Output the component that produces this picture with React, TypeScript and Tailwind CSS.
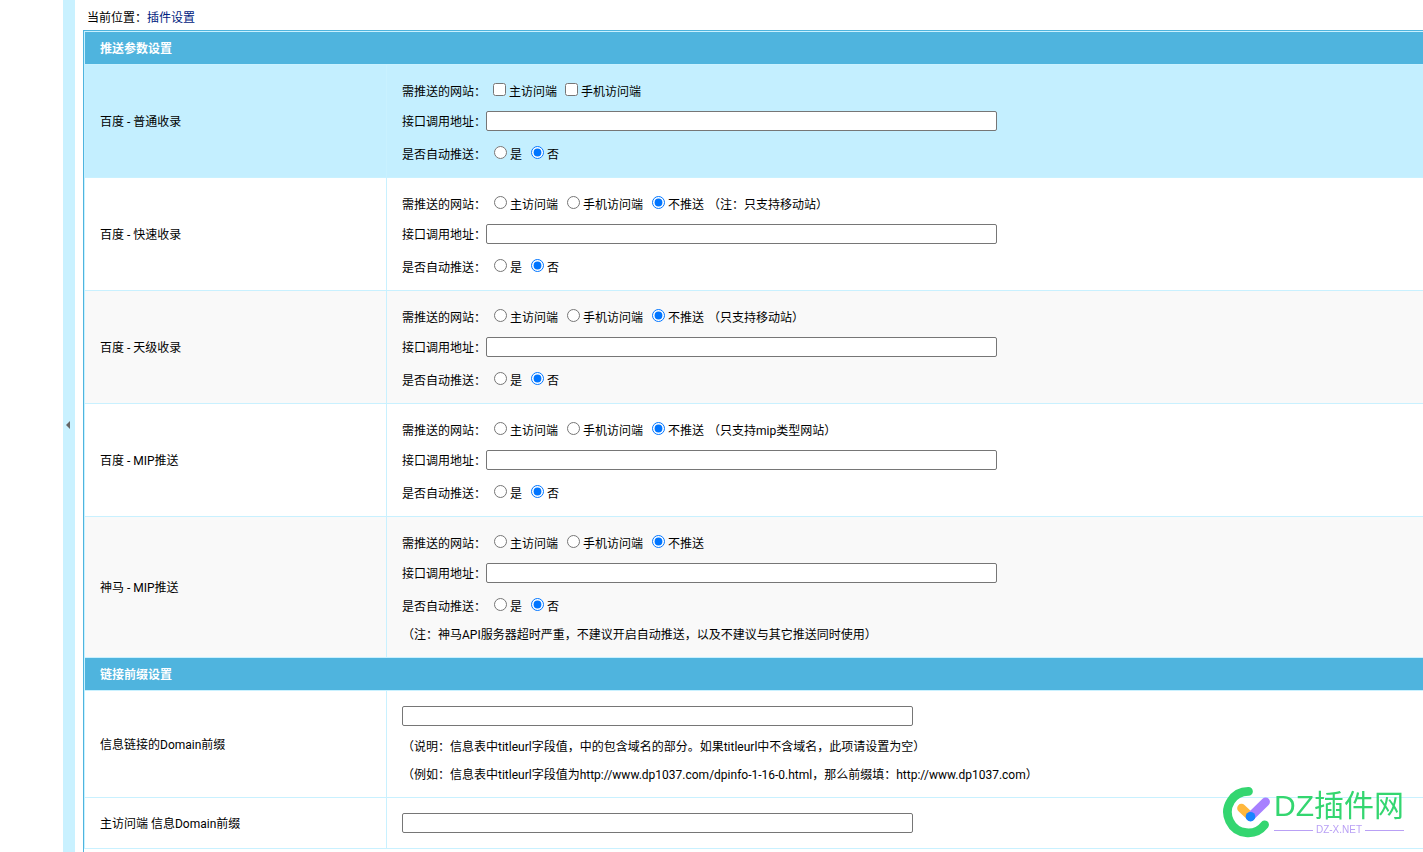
import React, { useState } from 'react';

interface Option {
  value: string;
  label: string;
}

interface PushChannel {
  id: string;
  title: string;
  multiple?: boolean;
  options: Option[];
  hint?: string;
  note?: string;
  rowClass: string;
}

const siteOptions: Option[] = [
  { value: 'pc', label: '主访问端' },
  { value: 'mobile', label: '手机访问端' },
];

const siteOptionsWithNone: Option[] = [...siteOptions, { value: 'none', label: '不推送' }];

const yesNoOptions: Option[] = [
  { value: 'yes', label: '是' },
  { value: 'no', label: '否' },
];

const channels: PushChannel[] = [
  { id: 'baidu-normal', title: '百度 - 普通收录', multiple: true, options: siteOptions, rowClass: 'bg-[#c4efff]' },
  { id: 'baidu-fast', title: '百度 - 快速收录', options: siteOptionsWithNone, hint: '（注：只支持移动站）', rowClass: 'bg-white' },
  { id: 'baidu-day', title: '百度 - 天级收录', options: siteOptionsWithNone, hint: '（只支持移动站）', rowClass: 'bg-[#f9f9f9]' },
  { id: 'baidu-mip', title: '百度 - MIP推送', options: siteOptionsWithNone, hint: '（只支持mip类型网站）', rowClass: 'bg-white' },
  {
    id: 'shenma-mip',
    title: '神马 - MIP推送',
    options: siteOptionsWithNone,
    note: '（注：神马API服务器超时严重，不建议开启自动推送，以及不建议与其它推送同时使用）',
    rowClass: 'bg-[#f9f9f9]',
  },
];

const cellBorder = 'border border-[#c9f1ff]';
const labelCell = `${cellBorder} px-[15px] pt-[2px] text-left font-normal`;

const TextInput: React.FC<{ id: string }> = ({ id }) => (
  <input id={id} type="text" className="h-5 w-[511px] rounded-[2px] border border-[#767676] bg-white px-1" />
);

const RadioGroup: React.FC<{ name: string; label: string; options: Option[]; initial: string }> = ({ name, label, options, initial }) => {
  const [value, setValue] = useState(initial);
  return (
    <div role="radiogroup" aria-label={label} className="ml-2 flex gap-[9px]">
      {options.map(option => (
        <label key={option.value} className="flex items-center gap-[3px]">
          <input
            type="radio"
            name={name}
            checked={value === option.value}
            onChange={() => setValue(option.value)}
            className="mb-[3px] size-[13px]"
          />
          <span className="pt-[2px]">{option.label}</span>
        </label>
      ))}
    </div>
  );
};

const CheckboxGroup: React.FC<{ name: string; label: string; options: Option[] }> = ({ name, label, options }) => (
  <div role="group" aria-label={label} className="ml-[7px] flex gap-2">
    {options.map(option => (
      <label key={option.value} className="flex items-center gap-[3px]">
        <input type="checkbox" name={name} value={option.value} className="mb-[3px] size-[13px]" />
        <span className="pt-[2px]">{option.label}</span>
      </label>
    ))}
  </div>
);

const SectionHeader: React.FC<{ title: string }> = ({ title }) => (
  <tr className="bg-[#4fb4de]">
    <th colSpan={2} className={`${cellBorder} border-r-0 h-[33px] px-[15px] pt-[2px] text-left font-bold text-white`}>
      {title}
    </th>
  </tr>
);

const ChannelRow: React.FC<{ channel: PushChannel }> = ({ channel }) => (
  <tr className={channel.rowClass}>
    <th className={labelCell}>{channel.title}</th>
    <td className={`${cellBorder} border-r-0 px-[15px] pt-3 pb-[9px]`}>
      <div className="flex h-7 items-center">
        <span className="pt-[2px]">需推送的网站：</span>
        {channel.multiple ? (
          <CheckboxGroup name={`${channel.id}-site`} label="需推送的网站" options={channel.options} />
        ) : (
          <RadioGroup name={`${channel.id}-site`} label="需推送的网站" options={channel.options} initial="none" />
        )}
        {channel.hint && <span className="ml-1 pt-[2px]">{channel.hint}</span>}
      </div>
      <div className="mb-[3px] flex h-8 items-center">
        <label htmlFor={`${channel.id}-api`} className="pt-[2px]">接口调用地址：</label>
        <TextInput id={`${channel.id}-api`} />
      </div>
      <div className="flex h-7 items-center">
        <span className="pt-[2px]">是否自动推送：</span>
        <RadioGroup name={`${channel.id}-auto`} label="是否自动推送" options={yesNoOptions} initial="no" />
      </div>
      {channel.note && <p className="flex h-7 items-center pt-[2px]">{channel.note}</p>}
    </td>
  </tr>
);

const SiteLogo: React.FC = () => (
  <div className="fixed right-[19px] bottom-[14px] flex items-center gap-1 whitespace-nowrap">
    <svg width="48" height="52" viewBox="22 16 48 52" fill="none" strokeLinecap="round" strokeWidth="8.7" aria-hidden="true">
      <path d="M48.5 21.4A20.7 20.7 0 1 0 64.6 54.8" stroke="#34d670" />
      <path d="M41.5 38.2L50.5 46.7" stroke="#ffb83d" />
      <path d="M50.5 46.7L65.6 31.8" stroke="#a780ff" />
      <circle cx="50.5" cy="46.7" r="4.8" fill="#1684ff" />
    </svg>
    <div className="font-['Liberation_Sans','Noto_Sans_CJK_SC',sans-serif]">
      <div className="text-[30px] leading-9 text-[#34d670]">DZ插件网</div>
      <div className="flex items-center gap-[3px] text-[10px] leading-3 text-[#b9a0f5]">
        <span className="h-px flex-1 bg-[#b9a0f5]" />
        DZ-X.NET
        <span className="h-px flex-1 bg-[#b9a0f5]" />
      </div>
    </div>
  </div>
);

const App: React.FC = () => {
  const [collapsed, setCollapsed] = useState(false);

  return (
    <div className="flex min-h-screen bg-white font-['Roboto','Noto_Sans_CJK_SC',sans-serif] text-xs text-black" lang="zh-CN">
      {!collapsed && <aside className="w-[63px] shrink-0" />}
      <button
        type="button"
        aria-label="收起菜单"
        onClick={() => setCollapsed(!collapsed)}
        className="flex w-3 shrink-0 items-center bg-[#c9f1ff] pb-[2px] pl-[3px]"
      >
        <svg width="4" height="8" viewBox="0 0 4 8" aria-hidden="true">
          <path d="M4 0v8L0 4z" fill="#666" />
        </svg>
      </button>
      <main className="flex min-w-0 flex-1 flex-col pl-2">
        <nav className="pt-[6px] pl-1 leading-6">
          当前位置：<a href="#" className="text-[#002280]">插件设置</a>
        </nav>
        <div className="flex-1 border-t border-l border-[#4fb4de]">
          <table className="w-full table-fixed border-collapse">
            <colgroup>
              <col className="w-[302px]" />
              <col />
            </colgroup>
            <tbody>
              <SectionHeader title="推送参数设置" />
              {channels.map(channel => (
                <ChannelRow key={channel.id} channel={channel} />
              ))}
              <SectionHeader title="链接前缀设置" />
              <tr>
                <th className={labelCell}>
                  <label htmlFor="domain-info">信息链接的Domain前缀</label>
                </th>
                <td className={`${cellBorder} border-r-0 px-[15px] pt-[15px] pb-2`}>
                  <div className="mb-[7px] flex">
                    <TextInput id="domain-info" />
                  </div>
                  <p className="leading-7">（说明：信息表中titleurl字段值，中的包含域名的部分。如果titleurl中不含域名，此项请设置为空）</p>
                  <p className="leading-7">（例如：信息表中titleurl字段值为http://www.dp1037.com/dpinfo-1-16-0.html，那么前缀填：http://www.dp1037.com）</p>
                </td>
              </tr>
              <tr>
                <th className={labelCell}>
                  <label htmlFor="domain-pc">主访问端 信息Domain前缀</label>
                </th>
                <td className={`${cellBorder} border-r-0 p-[15px]`}>
                  <div className="flex">
                    <TextInput id="domain-pc" />
                  </div>
                </td>
              </tr>
            </tbody>
          </table>
        </div>
      </main>
      <SiteLogo />
    </div>
  );
};

export default App;
